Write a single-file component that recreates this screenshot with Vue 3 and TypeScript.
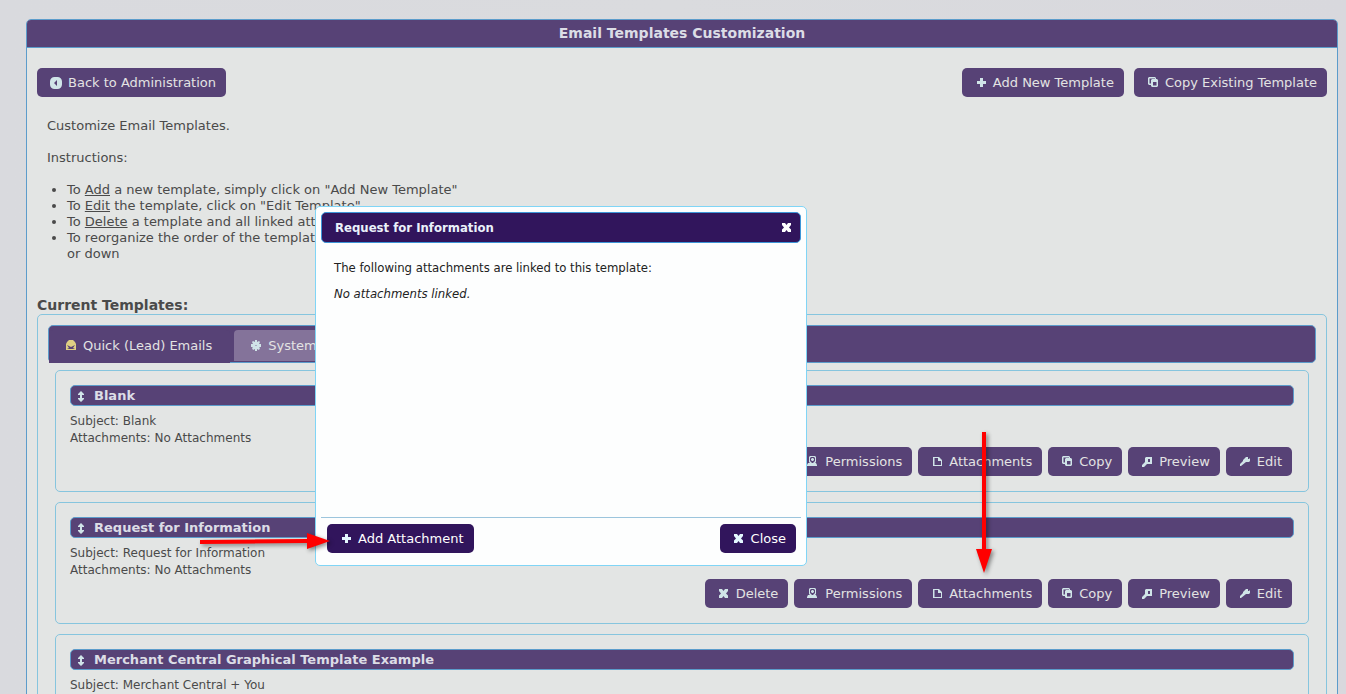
<script setup lang="ts">
import { h, ref, type FunctionalComponent } from 'vue'

type IconName =
  | 'back' | 'plus' | 'copy' | 'close' | 'person' | 'document'
  | 'search' | 'wrench' | 'mail' | 'gear' | 'updown'

const shapes: Record<IconName, string> = {
  back: 'M6.500 3h3a4.500 4.500 0 0 1 4.500 4.500v3a4.500 4.500 0 0 1-4.500 4.500h-3a4.500 4.500 0 0 1-4.500-4.500v-3a4.500 4.500 0 0 1 4.500-4.500zM9 6L6 9l3 3z',
  plus: 'M7 4h3v3h3v3h-3v3H7v-3H4V7h3z',
  copy: 'M3 4l1-1h6l1 1v1h1l1 1v6l-1 1H7l-1-1v-1H4l-1-1zM4.500 4.500v5H6V6l1-1h3V4.500zM8 8v3.500h3.500V8z',
  close: 'M3 4h3l1.500 2L9 4h3v2l-2 2.500 2 2V13H9l-1.500-2L6 13H3v-2.500l2-2L3 6z',
  person: 'M5 3h5l1 1v5l-1 1h1l1 2v1H2v-1l1-2h2L4 9V4zM6 4L5 5v3l2 2h1l2-2V5L9 4zM7 5h1l1 1v1L8 8H7L6 7V6z',
  document: 'M4 4h6l3 3v6H4zM5.500 5v7H12V8H9V5z',
  search: 'M7 4h6v7H8l-3 3H3v-2l3-3V5zM9 6v3h2V6z',
  wrench: 'M9 4h2v2h1l1-1v3l-1 1H9l-5 4H3v-2l3-3V7z',
  mail: 'M3 7l1-2 2-2h4l2 2 1 2v6H3zM4 8l2 3-2 1h8l-2-1 2-3-4 2z',
  gear: 'M7 3h2v2l2-1 1 1-1 2h2v3h-2l1 1-1 2-2-1v2H7v-2l-2 1-1-2 1-1H3V7h2L4 5l1-1 2 1zM7.500 8v1h1V8z',
  updown: 'M8 4l3 3v1H9v3h2v1l-3 3-3-3v-1h2V8H5V7z',
}

const Icon: FunctionalComponent<{ name: IconName }> = (props) =>
  h('svg', { width: 16, height: 16, viewBox: '0 1 16 16', fill: 'currentColor', 'aria-hidden': 'true' }, [
    h('path', { d: shapes[props.name], 'fill-rule': 'evenodd' }),
  ])
Icon.props = ['name']

interface Template {
  title: string
  subject: string
  attachments: string
}

const templates: Template[] = [
  { title: 'Blank', subject: 'Blank', attachments: 'No Attachments' },
  { title: 'Request for Information', subject: 'Request for Information', attachments: 'No Attachments' },
  { title: 'Merchant Central Graphical Template Example', subject: 'Merchant Central + You', attachments: 'No Attachments' },
]

const actions: { label: string; icon: IconName }[] = [
  { label: 'Delete', icon: 'close' },
  { label: 'Permissions', icon: 'person' },
  { label: 'Attachments', icon: 'document' },
  { label: 'Copy', icon: 'copy' },
  { label: 'Preview', icon: 'search' },
  { label: 'Edit', icon: 'wrench' },
]

const dialogOpen = ref(true)
</script>

<template>
  <div class="page">
    <main class="panel">
      <h1 class="panel-title">Email Templates Customization</h1>
      <div class="content">
        <div class="toolbar">
          <button type="button" class="btn"><Icon class="icon" name="back" />Back to Administration</button>
          <div class="toolbar-right">
            <button type="button" class="btn"><Icon class="icon" name="plus" />Add New Template</button>
            <button type="button" class="btn"><Icon class="icon" name="copy" />Copy Existing Template</button>
          </div>
        </div>

        <div class="intro">
          <p>Customize Email Templates.</p>
          <p>Instructions:</p>
          <ul>
            <li>To <u>Add</u> a new template, simply click on "Add New Template"</li>
            <li>To <u>Edit</u> the template, click on "Edit Template"</li>
            <li>To <u>Delete</u> a template and all linked attachments, click on "Delete"</li>
            <li>To reorganize the order of the templates, click and drag the template up<br>or down</li>
          </ul>
        </div>

        <h2 class="section-title">Current Templates:</h2>
        <section class="tabs">
          <div class="tab-bar" role="tablist">
            <button type="button" role="tab" class="tab active" aria-selected="true"><Icon class="icon gold" name="mail" />Quick (Lead) Emails</button>
            <button type="button" role="tab" class="tab" aria-selected="false"><Icon class="icon" name="gear" />System Emails</button>
          </div>
          <div class="cards">
            <article v-for="t in templates" :key="t.title" class="card">
              <h3 class="card-title"><Icon class="icon" name="updown" />{{ t.title }}</h3>
              <div class="meta">
                <div>Subject: {{ t.subject }}</div>
                <div>Attachments: {{ t.attachments }}</div>
              </div>
              <div class="actions">
                <button
                  v-for="a in actions"
                  :key="a.label"
                  type="button"
                  class="btn"
                  @click="a.label === 'Attachments' && (dialogOpen = true)"
                ><Icon class="icon" :name="a.icon" />{{ a.label }}</button>
              </div>
            </article>
          </div>
        </section>
      </div>
    </main>

    <div v-if="dialogOpen" class="dialog" role="dialog" aria-labelledby="dialog-title">
      <div class="dialog-head">
        <h2 id="dialog-title">Request for Information</h2>
        <button type="button" class="dialog-x" aria-label="Close dialog" @click="dialogOpen = false"><Icon class="icon" name="close" /></button>
      </div>
      <div class="dialog-body">
        <p>The following attachments are linked to this template:</p>
        <p><em>No attachments linked.</em></p>
      </div>
      <div class="dialog-foot">
        <button type="button" class="btn strong"><Icon class="icon" name="plus" />Add Attachment</button>
        <button type="button" class="btn strong" @click="dialogOpen = false"><Icon class="icon" name="close" />Close</button>
      </div>
    </div>

    <svg class="arrow arrow-right" width="130" height="17" viewBox="0 0 130 17" aria-hidden="true">
      <path d="M0 7L107 6V0l23 8-23 8v-6L0 11z" fill="#ff0000" />
    </svg>
    <svg class="arrow arrow-down" width="17" height="141" viewBox="0 0 17 141" aria-hidden="true">
      <path d="M6 0h4v117h6L8 141 0 117h6z" fill="#ff0000" />
    </svg>
  </div>
</template>

<style>
body {
  margin: 0;
  background: #dadbdf;
}
</style>

<style scoped>
.page {
  position: relative;
  box-sizing: border-box;
  height: 100vh;
  overflow: hidden;
  padding: 19px 8px 0 26px;
  background: linear-gradient(90deg, #d9dade, #dadbde 50%, #d8d8dd);
  font: 13px/16px Verdana, "DejaVu Sans", sans-serif;
  color: #4a4a4a;
}
h1, h2, h3, p, ul {
  margin: 0;
  padding: 0;
}
button {
  font: inherit;
  border: 0;
  cursor: pointer;
}
.icon {
  flex: none;
  color: #d0e4e8;
}
.panel {
  border: 1px solid #5c9ccb;
  border-radius: 5px 5px 0 0;
  background: #e3e5e4;
}
.panel-title {
  height: 27px;
  border-bottom: 1px solid #5c9ccb;
  border-radius: 4px 4px 0 0;
  background: #574276;
  color: #dcdde6;
  font-size: 14px;
  line-height: 27px;
  text-align: center;
}
.content {
  padding: 20px 10px;
}
.toolbar, .toolbar-right {
  display: flex;
  justify-content: space-between;
  gap: 10px;
}
.btn {
  display: flex;
  align-items: center;
  gap: 4px;
  height: 29px;
  padding: 0 10px 0 11px;
  border-radius: 5px;
  background: #574276;
  color: #e3e3e3;
  white-space: nowrap;
}
.intro {
  padding: 21px 10px 0;
}
.intro p {
  margin-bottom: 16px;
}
.intro ul {
  padding-left: 20px;
}
.section-title {
  margin-top: 35px;
  font-size: 14px;
  line-height: 17px;
}
.tabs {
  border: 1px solid #86c5de;
  border-radius: 5px;
  padding: 10px;
}
.tab-bar {
  display: flex;
  gap: 4px;
  box-sizing: border-box;
  height: 38px;
  border: 1px solid #5c9ccb;
  border-radius: 5px;
  background: #574276;
}
.tab {
  display: flex;
  align-items: center;
  gap: 4px;
  box-sizing: border-box;
  height: 31px;
  margin-top: 4px;
  padding: 0 14px;
  border-radius: 4px 4px 0 0;
  background: #84739a;
  color: #e3e3e3;
}
.tab.active {
  height: 33px;
  padding: 0 18px 2px 14px;
  background: #574276;
}
.icon.gold {
  color: #dfcf83;
}
.cards {
  display: grid;
  gap: 10px;
  padding: 7px 7px 0;
}
.card {
  box-sizing: border-box;
  height: 122px;
  padding: 14px;
  border: 1px solid #86c5de;
  border-radius: 5px;
}
.card-title {
  display: flex;
  align-items: center;
  gap: 5px;
  box-sizing: border-box;
  height: 21px;
  padding-left: 2px;
  border: 1px solid #5c9ccb;
  border-radius: 5px;
  background: #574276;
  color: #dcdde6;
  font-size: 13px;
}
.meta {
  padding-top: 7px;
  font-size: 12px;
  line-height: 17px;
}
.actions {
  display: flex;
  justify-content: flex-end;
  gap: 6px;
  padding-right: 2px;
}
.dialog {
  position: absolute;
  top: 206px;
  left: 50%;
  display: flex;
  flex-direction: column;
  box-sizing: border-box;
  width: 492px;
  height: 360px;
  margin-left: -358px;
  padding: 5px 5px 4px;
  border: 1px solid #80d5f6;
  border-radius: 5px;
  background: #fdfefe;
  color: #222222;
}
.dialog-head {
  display: flex;
  align-items: center;
  justify-content: space-between;
  box-sizing: border-box;
  height: 31px;
  padding: 0 5px 0 13px;
  border: 1px solid #3d96d8;
  border-radius: 5px;
  background: #31155c;
  color: #eaf1fa;
}
.dialog-head h2 {
  font: bold 13px/16px Tahoma, "DejaVu Sans Condensed", sans-serif;
}
.dialog-x {
  display: flex;
  padding: 0;
  background: none;
}
.dialog-x .icon {
  color: #ffffff;
}
.dialog-body {
  flex: 1;
  padding: 16px 13px;
  font: 13px/18px Tahoma, "DejaVu Sans Condensed", sans-serif;
}
.dialog-body p {
  margin-bottom: 8px;
}
.dialog-foot {
  display: flex;
  justify-content: space-between;
  padding: 6px 5px 8px 6px;
  border-top: 1px solid #9cc5dd;
}
.strong {
  background: #31155c;
  color: #ffffff;
}
.strong .icon {
  color: #e4f8ff;
}
.arrow {
  position: absolute;
  filter: drop-shadow(2px 2px 2px rgba(0, 0, 0, 0.45));
}
.arrow-right {
  left: 200px;
  top: 533px;
}
.arrow-down {
  left: 976px;
  top: 432px;
}
</style>
